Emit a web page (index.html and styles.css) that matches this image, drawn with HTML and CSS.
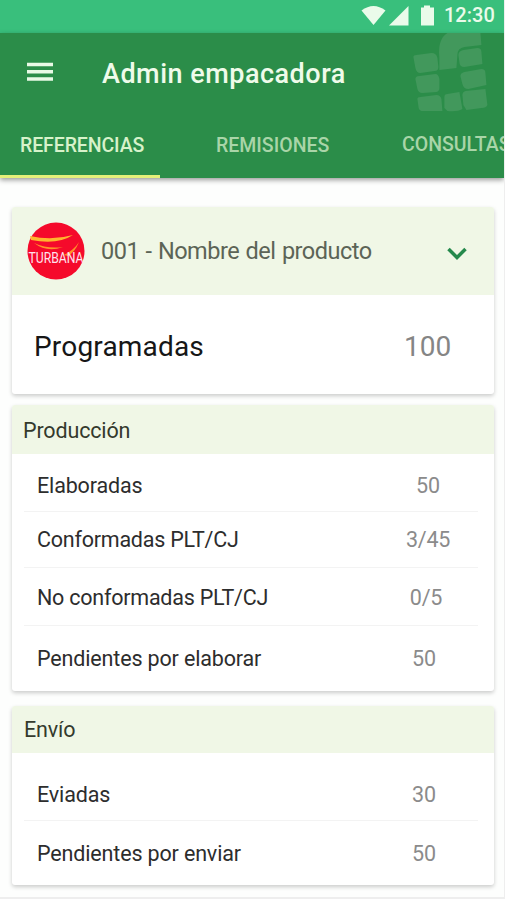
FILE: index.html
```html
<!DOCTYPE html>
<html lang="es">
<head>
<meta charset="utf-8">
<title>Admin empacadora</title>
<link rel="stylesheet" href="styles.css">
</head>
<body>
<div class="screen">
  <div class="status">
    <svg class="status-icons" width="76" height="24" viewBox="0 0 76 24">
      <path d="M0.500 6.500Q12.500-2.500 24.500 6.500L12.500 21Z"/>
      <path d="M28 21.500L47.500 2V21.500Z"/>
      <path d="M60 3.500h3V1.500h6v2h4v18H60Z"/>
    </svg>
    <span class="clock">12:30</span>
  </div>
  <header class="header">
    <div class="bar">
      <svg class="menu" width="26" height="20" viewBox="0 0 26 20"><path d="M0 2.500H26M0 9.700H26M0 17H26"/></svg>
      <h1 class="title">Admin empacadora</h1>
      <svg class="mark" width="76" height="80" viewBox="1.600 0 76 80">
        <path d="M28 37V25Q26 6 36 0H69L70 12L53 14Q46 15 46 22L45 35Z"/>
        <path d="M2 24Q2 22 5 22L20 20Q25 20 26 25L27 34Q27 38 23 38L9 40Q5 40 4 35Z"/>
        <path d="M52 17L66 15Q70 15 70 19L71 31L53 34Q48 34 48 29L47 22Q47 18 52 17Z"/>
        <path d="M4 46Q4 43 8 43L24 41Q27 41 28 46V55Q28 58 25 59L11 60Q7 60 6 56Z"/>
        <path d="M53 39L70 36Q74 36 74 40L75 52L57 56Q52 56 51 51L49 43Q49 40 53 39Z"/>
        <path d="M6 66Q6 64 9 64L25 62Q29 62 30 66L31 78H10Q7 77 7 73Z"/>
        <path d="M33 64Q33 61 36 61L48 59L51 76Q46 79 36 78L33 75Z"/>
        <path d="M51 62Q51 59 54 58L74 56L76 72Q75 75 70 75L55 77L52 72Z"/>
      </svg>
    </div>
    <nav class="tabs">
      <span class="tab tab-active"><span>REFERENCIAS</span></span>
      <span class="tab tab-second"><span>REMISIONES</span></span>
      <span class="tab tab-third"><span>CONSULTAS</span></span>
    </nav>
  </header>
  <main class="content">
    <section class="card product">
      <div class="product-head">
        <svg class="logo" width="58" height="58" viewBox="0 0 58 58">
          <circle cx="29" cy="29" r="28.500" fill="#f50a2b"/>
          <path d="M3 14Q25 19 46 13Q31 23 4 18Z" fill="#ffb52e"/>
          <path d="M7 21Q20 27 36 25Q20 31 7 21ZM52 20Q48 30 41 34L37 33Q47 28 52 20Z" fill="#ff9228"/>
          <text x="1.500" y="41" textLength="55" lengthAdjust="spacingAndGlyphs">TURBANA</text>
        </svg>
        <span class="product-name">001 - Nombre del producto</span>
        <svg class="chevron" width="20" height="14" viewBox="0 0 20 14"><path d="M1.500 2L10 10.500L18.500 2"/></svg>
      </div>
      <div class="total"><span class="total-label">Programadas</span><span class="total-value">100</span></div>
    </section>
    <section class="card production">
      <h2 class="card-title">Producción</h2>
      <div class="row r1"><span class="label">Elaboradas</span><span class="value v1">50</span></div>
      <div class="row r2"><span class="label">Conformadas PLT/CJ</span><span class="value v1">3/45</span></div>
      <div class="row r3"><span class="label">No conformadas PLT/CJ</span><span class="value v2">0/5</span></div>
      <div class="row r4"><span class="label">Pendientes por elaborar</span><span class="value v3">50</span></div>
    </section>
    <section class="card shipping">
      <h2 class="card-title">Envío</h2>
      <div class="row r5"><span class="label">Eviadas</span><span class="value v3">30</span></div>
      <div class="row r6"><span class="label">Pendientes por enviar</span><span class="value v3">50</span></div>
    </section>
  </main>
</div>
</body>
</html>
```
FILE: styles.css
```css
* { box-sizing: border-box; }
body { margin: 0; background: #fff; font-family: Roboto, sans-serif; overflow: hidden; }
h1, h2 { margin: 0; font-weight: 400; }
svg { display: block; flex: none; }
span, h1, h2 { white-space: nowrap; }
.screen { width: 505px; height: 899px; background: #fdfefd; border-right: 1px solid #eee; border-bottom: 2px solid #eee; overflow: hidden; }
.status { height: 33px; background: #39bf7c; display: flex; justify-content: flex-end; padding: 4px 10px 0 0; color: #eafbea; }
.status-icons { fill: #eafbea; margin-right: 7px; }
.clock { width: 50px; font-size: 20px; line-height: 23px; font-weight: 500; }
.header { height: 145px; background: #2b8d49; box-shadow: 0 2px 5px rgba(0,0,0,.4); }
.bar { height: 79px; display: flex; padding-left: 27px; }
.menu { margin-top: 29px; fill: none; stroke: #e9fae6; stroke-width: 3.500; }
.title { width: 311px; margin: 24px 0 0 49px; color: #effbea; font-size: 27px; line-height: 34px; font-weight: 500; letter-spacing: .5px; }
.mark { fill: #42985c; }
.tabs { display: flex; height: 66px; }
.tab { width: 160px; flex: none; padding: 21px 0 0 20px; color: #a9d5a8; font-size: 19.500px; line-height: 26px; font-weight: 500; }
.tab-active { color: #d7f2ca; border-bottom: 3px solid #e4f079; letter-spacing: -.1px; }
.tab-second { width: 226px; padding-left: 56px; }
.tab-third { width: 118px; padding: 20px 0 0 16px; overflow: hidden; }
.content { padding: 29px 10px 0 12px; }
.card { background: #fff; border-radius: 3px; box-shadow: 0 2px 4px rgba(0,0,0,.2); overflow: hidden; }
.product { height: 187px; }
.product-head { height: 88px; display: flex; background: #f0f7e6; padding-left: 15px; }
.logo { margin-top: 15px; }
.logo text { fill: #ffe3ee; font: 14px Roboto, sans-serif; }
.product-name { width: 346px; margin: 29px 0 0 16px; font-size: 23.500px; line-height: 30px; color: #5c6456; letter-spacing: -.48px; word-spacing: 1px; }
.chevron { margin-top: 40px; fill: none; stroke: #25894c; stroke-width: 3.500; }
.total { height: 99px; display: flex; padding: 35px 0 0 22px; font-size: 28px; line-height: 34px; }
.total-label { width: 370px; color: #161616; letter-spacing: .18px; }
.total-value { color: #858585; }
.production { height: 286px; margin-top: 11px; }
.shipping { height: 179px; margin-top: 15px; }
.card-title { height: 49px; padding: 11px 0 0 11px; background: #f0f7e6; color: #343a2d; font-size: 21.500px; line-height: 29px; letter-spacing: -.15px; }
.shipping .card-title { height: 47px; padding-top: 9px; padding-left: 12px; }
.row { margin: 0 16px 0 12px; padding-left: 13px; display: flex; border-bottom: 1px solid #f3f3f3; font-size: 21.500px; line-height: 28px; color: #2d2d2d; letter-spacing: -.15px; }
.r2, .r3 { letter-spacing: -.23px; }
.label { width: 341px; }
.value { width: 100px; text-align: center; color: #8b8b8b; }
.v2 { margin-left: -2px; }
.v3 { margin-left: -4px; }
.r1 { height: 58px; padding-top: 18px; }
.r2 { height: 56px; padding-top: 14px; }
.r3 { height: 58px; padding-top: 16px; }
.r4 { height: 65px; padding-top: 19px; border: 0; }
.r5 { height: 68px; padding-top: 28px; }
.r6 { height: 64px; padding-top: 19px; border: 0; }
```
